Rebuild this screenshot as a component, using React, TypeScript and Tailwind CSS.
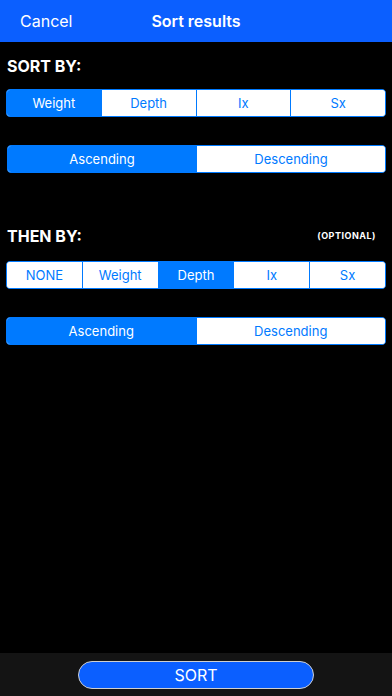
import React, { useState } from "react";

type SegProps = { items: string[]; selected: number; onSelect: (i: number) => void };

function Segmented({ items, selected, onSelect }: SegProps) {
  return (
    <div className="flex h-[28px] rounded-[4px] border border-[#007aff] overflow-hidden bg-white">
      {items.map((item, i) => (
        <button
          key={item}
          onClick={() => onSelect(i)}
          className={
            "flex-1 flex items-center justify-center text-[13px] pt-[1px] " +
            (i > 0 ? "border-l border-[#007aff] " : "") +
            (i === selected ? "bg-[#007aff] text-white" : "bg-white text-[#007aff]")
          }
        >
          {item}
        </button>
      ))}
    </div>
  );
}

export default function App() {
  const [sortBy, setSortBy] = useState(0);
  const [sortDir, setSortDir] = useState(0);
  const [thenBy, setThenBy] = useState(2);
  const [thenDir, setThenDir] = useState(0);

  return (
    <div
      className="w-[392px] h-[696px] bg-black flex flex-col text-white"
      style={{ fontFamily: "Inter, 'Liberation Sans', sans-serif" }}
    >
      {/* Nav bar */}
      <div className="h-[42px] bg-[#0b5fff] flex items-center relative shrink-0">
        <button className="pl-[20px] text-[16px]">Cancel</button>
        <div className="absolute left-0 right-0 text-center text-[16px] font-semibold pointer-events-none">
          Sort results
        </div>
      </div>

      <div className="flex-1 px-[6px]">
        <div className="pt-[12px] pl-[1px] text-[16px] font-bold h-[47px]">SORT BY:</div>
        <Segmented items={["Weight", "Depth", "Ix", "Sx"]} selected={sortBy} onSelect={setSortBy} />
        <div className="h-[28px]" />
        <div className="pl-[1px]">
          <Segmented items={["Ascending", "Descending"]} selected={sortDir} onSelect={setSortDir} />
        </div>

        <div className="mt-[54px] flex items-center justify-between h-[18px] pl-[1px] pr-[10px]">
          <span className="text-[16px] font-bold">THEN BY:</span>
          <span className="text-[9px] font-bold tracking-[0.5px]">(OPTIONAL)</span>
        </div>
        <div className="mt-[16px]">
          <Segmented
            items={["NONE", "Weight", "Depth", "Ix", "Sx"]}
            selected={thenBy}
            onSelect={setThenBy}
          />
        </div>
        <div className="mt-[28px]">
          <Segmented items={["Ascending", "Descending"]} selected={thenDir} onSelect={setThenDir} />
        </div>
      </div>

      {/* Footer */}
      <div className="h-[43px] bg-[#141414] flex items-center justify-center shrink-0">
        <button className="w-[236px] h-[28px] rounded-full bg-[#0b5fff] border border-[#d0d0d0] text-[16px]">
          SORT
        </button>
      </div>
    </div>
  );
}
